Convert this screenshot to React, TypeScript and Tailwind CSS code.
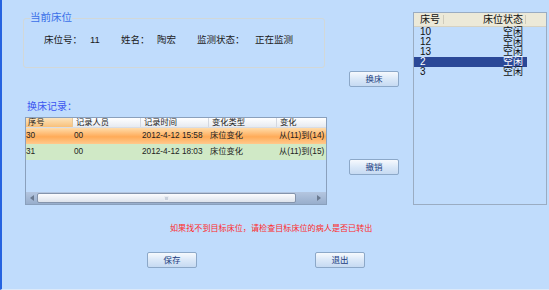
import React from 'react';

const font = "font-['Liberation_Sans','Noto_Sans_CJK_SC',sans-serif]";

const records = [
  { id: '30', user: '00', time: '2012-4-12 15:58', type: '床位变化', change: '从(11)到(14)', bg: 'bg-[linear-gradient(#ffdcaa,#ffab58_55%,#ffc98c)]' },
  { id: '31', user: '00', time: '2012-4-12 18:03', type: '床位变化', change: '从(11)到(15)', bg: 'bg-[#d0e9c6]' },
];

const beds = [
  { no: '10', state: '空闲' },
  { no: '12', state: '空闲' },
  { no: '13', state: '空闲' },
  { no: '2', state: '空闲', selected: true },
  { no: '3', state: '空闲' },
];

const Btn: React.FC<{ label: string; className?: string }> = ({ label, className = '' }) => (
  <button
    className={`w-[50px] h-[16px] rounded-[2px] border border-[#8ca8c8] bg-[linear-gradient(#f6f9fd,#dae8f8_50%,#c6daf2)] text-[8.5px] leading-[14px] text-[#203c80] ${className}`}
  >
    {label}
  </button>
);

export default function App() {
  return (
    <div className={`w-[549px] h-[290px] bg-[#c0dcfc] border-l-2 border-[#2563e0] border-b border-b-[#dce9f8] flex flex-col overflow-hidden ${font}`}>
      {/* top section */}
      <div className="flex items-start h-[205px]">
        {/* left column */}
        <div className="ml-[21px] w-[304px] flex flex-col">
          {/* group box */}
          <div className="relative mt-[18px] w-[302px] h-[50px] border border-[#d2d8d8] rounded-[3px]">
            <span className="absolute -top-[8px] left-[6px] bg-[#c0dcfc] text-[10.5px] leading-[12px] text-[#3a6fe8]">当前床位</span>
            <div className="flex pt-[15px] pl-[20px] text-[9.5px] leading-[12px] text-[#1a1a1a]">
              <span className="w-[46px]">床位号：</span>
              <span className="w-[31px]">11</span>
              <span className="w-[36px]">姓名：</span>
              <span className="w-[40px]">陶宏</span>
              <span className="w-[58px]">监测状态：</span>
              <span>正在监测</span>
            </div>
          </div>

          <div className="mt-[33px] ml-[4px] text-[10px] leading-[12px] text-[#3b55f0]">换床记录：</div>

          {/* records grid */}
          <div className="mt-[4px] ml-[2px] w-[302px] h-[88px] border border-[#8aa0bc] flex flex-col text-[8.25px] text-[#222] overflow-hidden">
            <div className="flex h-[10px] leading-[10px] shrink-0 border-b border-[#d8dce4]">
              <div className="w-[47px] pl-[2px] bg-[linear-gradient(#fde4bc,#f8c07a)] border-r border-[#e8c898]">序号</div>
              <div className="w-[68px] pl-[3px] bg-[linear-gradient(#ffffff,#e6eaf0)] border-r border-[#d4d8e0]">记录人员</div>
              <div className="w-[68px] pl-[3px] bg-[linear-gradient(#ffffff,#e6eaf0)] border-r border-[#d4d8e0]">记录时间</div>
              <div className="w-[68px] pl-[3px] bg-[linear-gradient(#ffffff,#e6eaf0)] border-r border-[#d4d8e0]">变化类型</div>
              <div className="flex-1 pl-[3px] bg-[linear-gradient(#ffffff,#e6eaf0)]">变化</div>
            </div>
            {records.map((r) => (
              <div key={r.id} className={`flex h-[16px] leading-[16px] shrink-0 whitespace-nowrap ${r.bg}`}>
                <div className="w-[47px]">{r.id}</div>
                <div className="w-[68px] pl-[1px]">{r.user}</div>
                <div className="w-[68px] pl-[1px]">{r.time}</div>
                <div className="w-[68px] pl-[1px]">{r.type}</div>
                <div className="flex-1 pl-[2px] overflow-hidden">{r.change}</div>
              </div>
            ))}
            <div className="flex-1" />
            {/* horizontal scrollbar */}
            <div className="h-[12px] shrink-0 flex items-center bg-[linear-gradient(#b4c6e0,#98aecc)]">
              <div className="w-[11px] flex justify-center">
                <svg width="4" height="6" viewBox="0 0 4 6"><path d="M4 0 L0 3 L4 6 Z" fill="#6a7a90" /></svg>
              </div>
              <div className="relative w-[259px] h-[10px] rounded-[2px] border border-[#8494ac] bg-[linear-gradient(#fbfcfe,#dde3ec)]">
                <div className="absolute left-[126px] top-[2px] w-[5px] h-[5px] bg-[#c8d0dc] border border-[#e8ecf2]" />
              </div>
              <div className="flex-1 flex justify-end pr-[5px]">
                <svg width="4" height="6" viewBox="0 0 4 6"><path d="M0 0 L4 3 L0 6 Z" fill="#6a7a90" /></svg>
              </div>
            </div>
          </div>
        </div>

        {/* middle buttons */}
        <div className="ml-[22px] w-[50px] flex flex-col">
          <Btn label="换床" className="mt-[71px]" />
          <Btn label="撤销" className="mt-[72px]" />
        </div>

        {/* bed list */}
        <div className="ml-[14px] mt-[12px] w-[134px] h-[193px] border border-[#9aacc2] text-[10px] text-[#111]">
          <div className="flex h-[14px] leading-[14px] bg-[#ece9d8] border-b border-[#d6d2c2]">
            <div className="w-[30px] pl-[6px] border-r border-[#cfcbbb] my-[2px] leading-[10px]">床号</div>
            <div className="w-[82px] pr-[2px] text-right border-r border-[#cfcbbb] my-[2px] leading-[10px]">床位状态</div>
          </div>
          {beds.map((b) => (
            <div key={b.no} className={`flex w-[113px] h-[10px] leading-[10px] ${b.selected ? 'bg-[#2b4897] text-white' : ''}`}>
              <div className="w-[30px] pl-[6px]">{b.no}</div>
              <div className="w-[79px] text-right">{b.state}</div>
            </div>
          ))}
        </div>
      </div>

      {/* hint */}
      <div className="mt-[19px] pl-[168px] text-[8.1px] leading-[10px] text-[#ff2a2a]">
        如果找不到目标床位，请检查目标床位的病人是否已转出
      </div>

      {/* bottom buttons */}
      <div className="mt-[18px] flex">
        <Btn label="保存" className="ml-[145px]" />
        <Btn label="退出" className="ml-[118px]" />
      </div>
    </div>
  );
}
